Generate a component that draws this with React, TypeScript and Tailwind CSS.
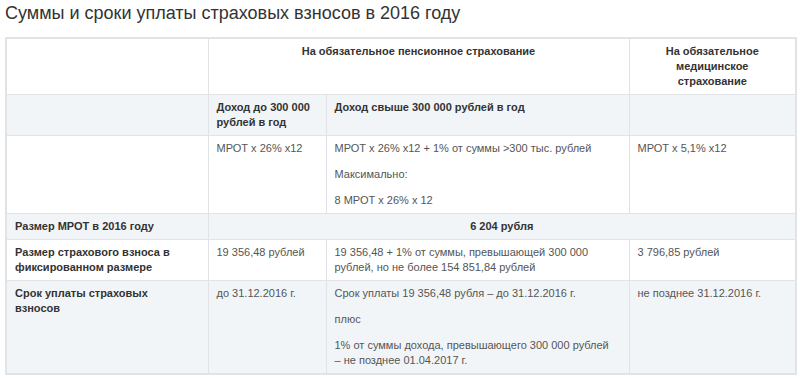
const cell = "border border-[#e1e3e6] px-2 py-[5px] align-top";
const gray = "bg-[#f2f5f8]";

const App = () => {
  return (
    <div className="bg-white w-[800px] h-[379px] pl-[5px] pr-[5px] pt-[1px] text-[11px] leading-[15px] text-[#555] font-['Liberation_Sans',Arial,sans-serif]">
      <h1 className="text-[18px] leading-[24px] text-[#333] font-normal mb-[12px]">
        Суммы и сроки уплаты страховых взносов в 2016 году
      </h1>
      <table className="w-[790px] border-collapse border-2 border-[#e1e3e6] table-fixed">
        <colgroup>
          <col className="w-[202px]" />
          <col className="w-[118px]" />
          <col className="w-[303px]" />
          <col className="w-[167px]" />
        </colgroup>
        <tbody>
          <tr>
            <td className={cell}></td>
            <td colSpan={2} className={`${cell} text-center font-bold text-[#333]`}>
              На обязательное пенсионное страхование
            </td>
            <td className={`${cell} text-center font-bold text-[#333]`}>
              На обязательное
              <br />
              медицинское
              <br />
              страхование
            </td>
          </tr>
          <tr className={gray}>
            <td className={cell}></td>
            <td className={`${cell} font-bold text-[#333]`}>
              Доход до 300 000
              <br />
              рублей в год
            </td>
            <td className={`${cell} font-bold text-[#333]`}>Доход свыше 300 000 рублей в год</td>
            <td className={cell}></td>
          </tr>
          <tr>
            <td className={cell}></td>
            <td className={cell}>МРОТ x 26% x12</td>
            <td className={cell}>
              <p>МРОТ x 26% x12 + 1% от суммы &gt;300 тыс. рублей</p>
              <p className="mt-[11px]">Максимально:</p>
              <p className="mt-[11px]">8 МРОТ x 26% x 12</p>
            </td>
            <td className={cell}>МРОТ x 5,1% x12</td>
          </tr>
          <tr className={gray}>
            <td className={`${cell} font-bold text-[#333]`}>Размер МРОТ в 2016 году</td>
            <td colSpan={3} className={`${cell} text-center font-bold text-[#333]`}>
              6 204 рубля
            </td>
          </tr>
          <tr>
            <td className={`${cell} font-bold text-[#333]`}>
              Размер страхового взноса в
              <br />
              фиксированном размере
            </td>
            <td className={cell}>19 356,48 рублей</td>
            <td className={cell}>
              19 356,48 + 1% от суммы, превышающей 300 000
              <br />
              рублей, но не более 154 851,84 рублей
            </td>
            <td className={cell}>3 796,85 рублей</td>
          </tr>
          <tr className={gray}>
            <td className={`${cell} font-bold text-[#333]`}>
              Срок уплаты страховых
              <br />
              взносов
            </td>
            <td className={cell}>до 31.12.2016 г.</td>
            <td className={cell}>
              <p>Срок уплаты 19 356,48 рубля – до 31.12.2016 г.</p>
              <p className="mt-[11px]">плюс</p>
              <p className="mt-[11px]">
                1% от суммы дохода, превышающего 300 000 рублей
                <br />– не позднее 01.04.2017 г.
              </p>
            </td>
            <td className={cell}>не позднее 31.12.2016 г.</td>
          </tr>
        </tbody>
      </table>
    </div>
  );
};

export default App;
